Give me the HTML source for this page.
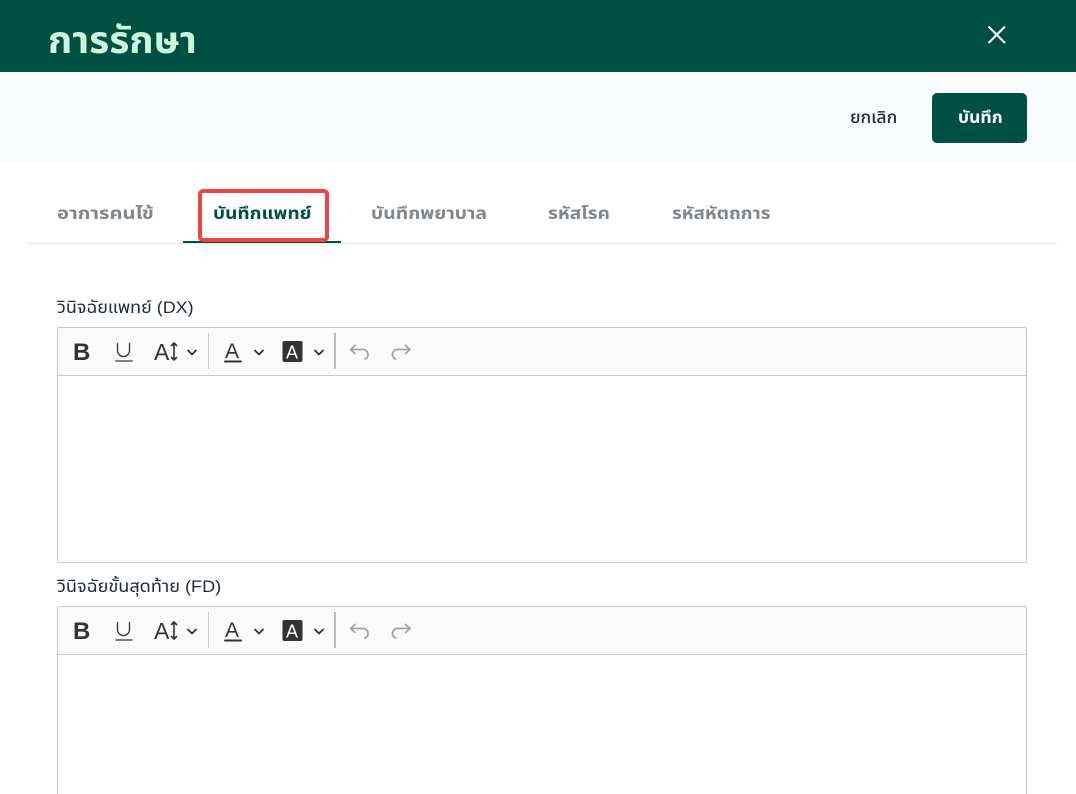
<!DOCTYPE html>
<html lang="th">
<head>
<meta charset="utf-8">
<style>
html,body{margin:0;padding:0;width:1076px;height:794px;overflow:hidden;background:#fff;font-family:"Liberation Sans","Noto Sans Thai","Noto Sans CJK SC",sans-serif;color:#1f2937}
#wrap{position:relative;width:1076px;height:794px;overflow:hidden}
.a{position:absolute;white-space:nowrap}
.s{transform-origin:left center}
.hdr{left:0;top:0;width:1076px;height:72px;background:#004f43}
.bar{left:0;top:72px;width:1076px;height:91px;background:#f9fafb}
.title{left:48px;top:18px;font-size:37px;line-height:46px;font-weight:700;color:#ccf5dc;transform:scaleX(1.05)}
.btn{left:932px;top:93px;width:95px;height:50px;border-radius:5px;background:#004f43}
.btnt{left:958px;top:105px;font-size:17px;line-height:26px;font-weight:700;color:#fff;transform:scaleX(1.03)}
.cancel{left:850px;top:105px;font-size:17px;line-height:26px;font-weight:500;color:#1f2937;transform:scaleX(1.03)}
.tab{top:202px;font-size:17px;line-height:24px;font-weight:700;color:#80858f}
.line{left:27px;top:243px;width:1030px;height:1px;background:#e5e7eb}
.ul{left:183px;top:241px;width:158px;height:2px;background:#004f43}
.red{left:198px;top:189px;width:123px;height:45px;border:4px solid #ef4444;border-radius:5px}
.lbl{left:57px;font-size:17px;line-height:24px;color:#1f2937;font-weight:400}
.ed{left:57px;width:968px;border:1px solid #c8c8c8;border-radius:2px;background:#fff}
.tb{height:47px;background:#fafafa;border-bottom:1px solid #c8c8c8;position:relative}
.tb svg{position:absolute;left:0;top:0}
</style>
</head>
<body>
<div id="wrap">
<div class="a hdr"></div>
<div class="a title s">การรักษา</div>
<svg class="a" style="left:985px;top:23px" width="24" height="24" viewBox="0 0 24 24"><path d="M3.5 3.5L20 20M20 3.5L3.5 20" stroke="#fff" stroke-width="2" fill="none"/></svg>
<div class="a bar"></div>
<div class="a cancel s">ยกเลิก</div>
<div class="a btn"></div>
<div class="a btnt s">บันทึก</div>

<div class="a tab s" style="left:57px;transform:scaleX(1.185)">อาการคนไข้</div>
<div class="a tab s" style="left:213px;color:#004f43;transform:scaleX(1.12)">บันทึกแพทย์</div>
<div class="a tab s" style="left:371px;transform:scaleX(1.137)">บันทึกพยาบาล</div>
<div class="a tab s" style="left:548px;transform:scaleX(1.12)">รหัสโรค</div>
<div class="a tab s" style="left:672px;transform:scaleX(1.11)">รหัสหัตถการ</div>
<div class="a line"></div>
<div class="a ul"></div>
<div class="a red"></div>

<div class="a lbl s" style="top:296px;transform:scaleX(1.055)">วินิจฉัยแพทย์ (DX)</div>
<div class="a ed" style="top:327px;height:234px">
<div class="tb">
<svg width="968" height="47" viewBox="0 0 968 47">
<g fill="none" stroke="#333" stroke-linecap="round" stroke-linejoin="round">
<text x="15" y="32" font-family="Liberation Sans" font-size="24" font-weight="700" fill="#333" stroke="none">B</text>
<path d="M59.500 15.500v7a6 6 0 0 0 12 0v-7" stroke-width="1.300"/>
<path d="M58 33h16" stroke-width="1.600" stroke="#555"/>
<text x="96" y="32" font-family="Liberation Sans" font-size="23" fill="#333" stroke="none">A</text>
<path d="M116 15v17M113.500 17.500l2.500-2.500 2.500 2.500M113.500 29.500l2.500 2.500 2.500-2.500" stroke-width="1.600"/>
<path d="M130 22.500l4 4 4-4" stroke-width="1.800"/>
<text x="167" y="30" font-family="Liberation Sans" font-size="21" fill="#333" stroke="none">A</text>
<path d="M167 33.500h16" stroke-width="2" stroke="#333"/>
<path d="M197 22.500l4 4 4-4" stroke-width="1.800"/>
<rect x="224.500" y="13" width="20" height="21" rx="2" fill="#333" stroke="none"/>
<text x="228" y="30.500" font-family="Liberation Sans" font-size="18" fill="#fff" stroke="none">A</text>
<path d="M257 22.500l4 4 4-4" stroke-width="1.800"/>
</g>
<path d="M150.500 5v36" stroke="#c8c8c8" stroke-width="1"/>
<path d="M277 5v36" stroke="#bbb" stroke-width="2"/>
<g fill="none" stroke="#a3a3a3" stroke-width="1.800" stroke-linecap="round" stroke-linejoin="round">
<path d="M297 17.500l-4.500 4 4.500 4M293 21.500h12a5 5 0 0 1 5 5c0 2-1 3.500-3 4.500"/>
<path d="M347.500 17.500l4.500 4-4.500 4M351.500 21.500h-12a5 5 0 0 0-5 5c0 2 1 3.500 3 4.500"/>
</g>
</svg>
</div>
</div>

<div class="a lbl s" style="top:575px;transform:scaleX(1.065)">วินิจฉัยขั้นสุดท้าย (FD)</div>
<div class="a ed" style="top:606px;height:188px;border-bottom:none;border-bottom-left-radius:0;border-bottom-right-radius:0">
<div class="tb">
<svg width="968" height="47" viewBox="0 0 968 47">
<g fill="none" stroke="#333" stroke-linecap="round" stroke-linejoin="round">
<text x="15" y="32" font-family="Liberation Sans" font-size="24" font-weight="700" fill="#333" stroke="none">B</text>
<path d="M59.500 15.500v7a6 6 0 0 0 12 0v-7" stroke-width="1.300"/>
<path d="M58 33h16" stroke-width="1.600" stroke="#555"/>
<text x="96" y="32" font-family="Liberation Sans" font-size="23" fill="#333" stroke="none">A</text>
<path d="M116 15v17M113.500 17.500l2.500-2.500 2.500 2.500M113.500 29.500l2.500 2.500 2.500-2.500" stroke-width="1.600"/>
<path d="M130 22.500l4 4 4-4" stroke-width="1.800"/>
<text x="167" y="30" font-family="Liberation Sans" font-size="21" fill="#333" stroke="none">A</text>
<path d="M167 33.500h16" stroke-width="2" stroke="#333"/>
<path d="M197 22.500l4 4 4-4" stroke-width="1.800"/>
<rect x="224.500" y="13" width="20" height="21" rx="2" fill="#333" stroke="none"/>
<text x="228" y="30.500" font-family="Liberation Sans" font-size="18" fill="#fff" stroke="none">A</text>
<path d="M257 22.500l4 4 4-4" stroke-width="1.800"/>
</g>
<path d="M150.500 5v36" stroke="#c8c8c8" stroke-width="1"/>
<path d="M277 5v36" stroke="#bbb" stroke-width="2"/>
<g fill="none" stroke="#a3a3a3" stroke-width="1.800" stroke-linecap="round" stroke-linejoin="round">
<path d="M297 17.500l-4.500 4 4.500 4M293 21.500h12a5 5 0 0 1 5 5c0 2-1 3.500-3 4.500"/>
<path d="M347.500 17.500l4.500 4-4.500 4M351.500 21.500h-12a5 5 0 0 0-5 5c0 2 1 3.500 3 4.500"/>
</g>
</svg>
</div>
</div>
</div>
</body>
</html>
